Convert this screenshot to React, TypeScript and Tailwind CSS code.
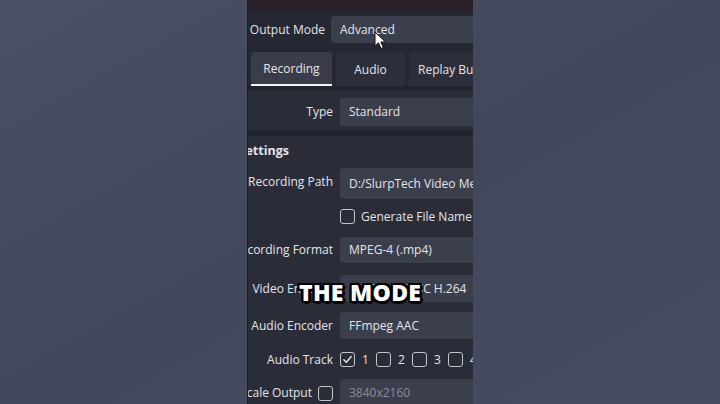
import React from "react";

function Label({ w, children }: { w: string; children: React.ReactNode }) {
  return (
    <div className={`${w} shrink-0 flex justify-end items-center overflow-hidden whitespace-nowrap`}>
      {children}
    </div>
  );
}

function Box({ children, h, dim }: { children?: React.ReactNode; h: string; dim?: boolean }) {
  return (
    <div
      className={`${h} w-[260px] shrink-0 rounded-[4px] bg-[#3b3e4b] pl-[9px] flex items-center whitespace-nowrap ${
        dim ? "text-[#8a8d98]" : ""
      }`}
    >
      {children}
    </div>
  );
}

function Check({ checked }: { checked?: boolean }) {
  return (
    <div className="w-[15px] h-[15px] shrink-0 rounded-[3px] border-[1.5px] border-[#c4c6ce] bg-[#2a2d38] flex items-center justify-center">
      {checked && (
        <svg width="11" height="11" viewBox="0 0 12 12">
          <path d="M2 6.3 L4.8 9 L10 2.8" fill="none" stroke="#e6e7ec" strokeWidth="1.5" strokeLinecap="round" strokeLinejoin="round" />
        </svg>
      )}
    </div>
  );
}

export default function App() {
  return (
    <div className="relative w-[720px] h-[404px] flex bg-gradient-to-br from-[#4a5065] via-[#41485b] to-[#464b63] [font-family:'Open_Sans',sans-serif]">
      <div className="w-[247px] shrink-0" />
      <div className="w-[226px] h-full shrink-0 overflow-hidden bg-[#252832] flex flex-col text-[12px] text-[#e3e4e9] border-l border-[#1d1f27]">
        <div className="h-[10px] shrink-0 bg-[#2b2027]" />
        {/* Output mode */}
        <div className="mt-[6px] flex items-center gap-[6px] h-[27px] shrink-0">
          <Label w="w-[77px]">Output Mode</Label>
          <Box h="h-[27px]">Advanced</Box>
        </div>
        {/* Tabs */}
        <div className="mt-[9px] flex gap-[4px] pl-[3px] h-[34px] shrink-0">
          <div className="w-[81px] shrink-0 rounded-t-[4px] bg-[#3a3d49] border-b-2 border-[#f2f2f4] flex items-center justify-center pt-[2px]">
            Recording
          </div>
          <div className="w-[69px] shrink-0 rounded-t-[4px] bg-[#2c2f3a] flex items-center justify-center pt-[2px]">
            Audio
          </div>
          <div className="w-[100px] shrink-0 rounded-t-[4px] bg-[#2c2f3a] flex items-center pl-[9px] whitespace-nowrap pt-[2px]">
            Replay Buffer
          </div>
        </div>
        <div className="h-[4px] shrink-0 bg-[#21242c]" />
        {/* Tab content */}
        <div className="flex-1 bg-[#2a2d38] flex flex-col">
          <div className="mt-[8px] flex items-center gap-[7px] shrink-0">
            <Label w="w-[85px]">Type</Label>
            <Box h="h-[28px]">Standard</Box>
          </div>
          <div className="mt-[4px] h-[6px] shrink-0 bg-[#22252e]" />
          <div className="mt-[5px] h-[20px] shrink-0 flex items-center">
            <div className="w-[41px] flex justify-end overflow-hidden whitespace-nowrap font-bold text-[12.5px]">
              Recording Settings
            </div>
          </div>
          <div className="mt-[7px] flex items-center gap-[7px] shrink-0">
            <Label w="w-[85px]">
              <span className="mb-[3px]">Recording Path</span>
            </Label>
            <Box h="h-[31px]">D:/SlurpTech Video Media</Box>
          </div>
          <div className="mt-[10px] flex items-center gap-[7px] shrink-0 h-[15px]">
            <div className="w-[85px] shrink-0" />
            <Check />
            <span className="whitespace-nowrap ml-[-1px] mt-[1px]">Generate File Name without Space</span>
          </div>
          <div className="mt-[13px] flex items-center gap-[7px] shrink-0">
            <Label w="w-[85px]">Recording Format</Label>
            <Box h="h-[26px]">MPEG-4 (.mp4)</Box>
          </div>
          <div className="mt-[12px] flex items-center gap-[7px] shrink-0">
            <Label w="w-[85px]">Video Encoder</Label>
            <Box h="h-[27px]">NVIDIA NVENC H.264</Box>
          </div>
          <div className="mt-[10px] flex items-center gap-[7px] shrink-0">
            <Label w="w-[85px]">Audio Encoder</Label>
            <Box h="h-[27px]">FFmpeg AAC</Box>
          </div>
          <div className="mt-[13px] flex items-center gap-[7px] shrink-0 h-[15px]">
            <Label w="w-[85px]">Audio Track</Label>
            <div className="flex items-center whitespace-nowrap">
              <Check checked />
              <span className="ml-[7px] w-[14px]">1</span>
              <Check />
              <span className="ml-[7px] w-[14px]">2</span>
              <Check />
              <span className="ml-[7px] w-[14px]">3</span>
              <Check />
              <span className="ml-[7px] w-[14px]">4</span>
              <Check />
              <span className="ml-[7px] w-[14px]">5</span>
            </div>
          </div>
          <div className="mt-[12px] flex items-center gap-[7px] shrink-0">
            <Label w="w-[85px]">
              <span>Rescale Output</span>
              <span className="ml-[6px]">
                <Check />
              </span>
            </Label>
            <Box h="h-[28px]" dim>
              3840x2160
            </Box>
          </div>
        </div>
      </div>
      <div className="flex-1" />

      {/* cursor */}
      <svg className="absolute left-[374px] top-[31px]" width="13" height="19" viewBox="0 0 13 19">
        <path d="M1 1 L1 15 L4.5 11.8 L7 17.5 L9.3 16.5 L6.9 11 L11.5 11 Z" fill="#ffffff" stroke="#111" strokeWidth="1" strokeLinejoin="round" />
      </svg>

      {/* caption */}
      <div className="absolute left-[299px] top-[277px] text-[23px] leading-[30px] font-black tracking-[0.3px] text-white whitespace-nowrap [font-family:'Open_Sans',sans-serif] [text-shadow:2px_0_0_#000,-2px_0_0_#000,0_2px_0_#000,0_-2px_0_#000,2px_2px_0_#000,-2px_-2px_0_#000,2px_-2px_0_#000,-2px_2px_0_#000,1px_3px_0_#000,3px_1px_0_#000]">
        THE MODE
      </div>
    </div>
  );
}
